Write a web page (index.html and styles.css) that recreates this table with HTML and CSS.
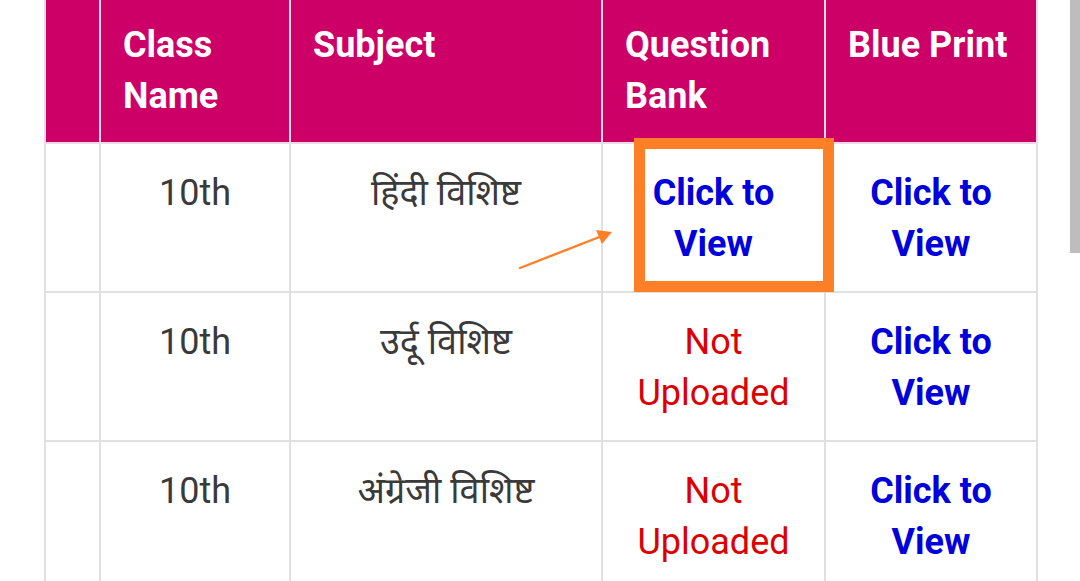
FILE: index.html
```html
<!DOCTYPE html>
<html>
<head>
<meta charset="utf-8">
<link rel="stylesheet" href="styles.css">
</head>
<body>
<div class="page">
  <div class="wrap">
    <table class="grid">
      <colgroup>
        <col class="c0"><col class="c1"><col class="c2"><col class="c3"><col class="c4">
      </colgroup>
      <thead>
        <tr>
          <th></th>
          <th>Class Name</th>
          <th>Subject</th>
          <th>Question Bank</th>
          <th>Blue Print</th>
        </tr>
      </thead>
      <tbody>
        <tr>
          <td></td>
          <td>10th</td>
          <td>हिंदी विशिष्ट</td>
          <td class="link">Click to View</td>
          <td class="link">Click to View</td>
        </tr>
        <tr>
          <td></td>
          <td>10th</td>
          <td>उर्दू विशिष्ट</td>
          <td class="none">Not Uploaded</td>
          <td class="link">Click to View</td>
        </tr>
        <tr>
          <td></td>
          <td>10th</td>
          <td>अंग्रेजी विशिष्ट</td>
          <td class="none">Not Uploaded</td>
          <td class="link">Click to View</td>
        </tr>
      </tbody>
    </table>
    <div class="highlight"></div>
    <svg class="arrow" width="110" height="50" viewBox="0 0 110 50">
      <line x1="4" y1="44" x2="86" y2="12" stroke="#ff7f27" stroke-width="2.4" stroke-linecap="round"/>
      <polygon points="96,8 80,6 86,20" fill="#ff7f27"/>
    </svg>
  </div>
  <div class="scrollbar"></div>
</div>
</body>
</html>
```
FILE: styles.css
```css
html, body {
  margin: 0;
  padding: 0;
  background: #ffffff;
}
.page {
  position: relative;
  width: 1080px;
  height: 581px;
  overflow: hidden;
  font-family: Roboto, "Noto Sans", "Noto Sans Devanagari", sans-serif;
}
.wrap {
  position: relative;
  margin-left: 44px;
  width: 994px;
}
.grid {
  border-collapse: collapse;
  table-layout: fixed;
  width: 992px;
  font-size: 36px;
  line-height: 51px;
}
.c0 { width: 55px; }
.c1 { width: 190px; }
.c2 { width: 312px; }
.c3 { width: 223px; }
.c4 { width: 212px; }
.grid th {
  background: #cc0066;
  color: #ffffff;
  font-weight: 700;
  text-align: left;
  vertical-align: top;
  padding: 20px 20px 20px 22px;
  border: 2px solid #f2d9e6;
  border-top: none;
}
.grid td {
  color: #3a3a3a;
  text-align: center;
  vertical-align: top;
  padding: 24px 20px 21px 20px;
  border: 2px solid #e0e0e0;
}
.grid td.link {
  color: #0000dd;
  font-weight: 700;
}
.grid td.none {
  color: #dd0000;
}
.highlight {
  position: absolute;
  left: 590px;
  top: 138px;
  width: 178px;
  height: 132px;
  border: 11px solid #ff7f27;
}
.arrow {
  position: absolute;
  left: 472px;
  top: 224px;
}
.scrollbar {
  position: absolute;
  right: 0;
  top: 0;
  width: 10px;
  height: 253px;
  background: #bdbdbd;
}
```
